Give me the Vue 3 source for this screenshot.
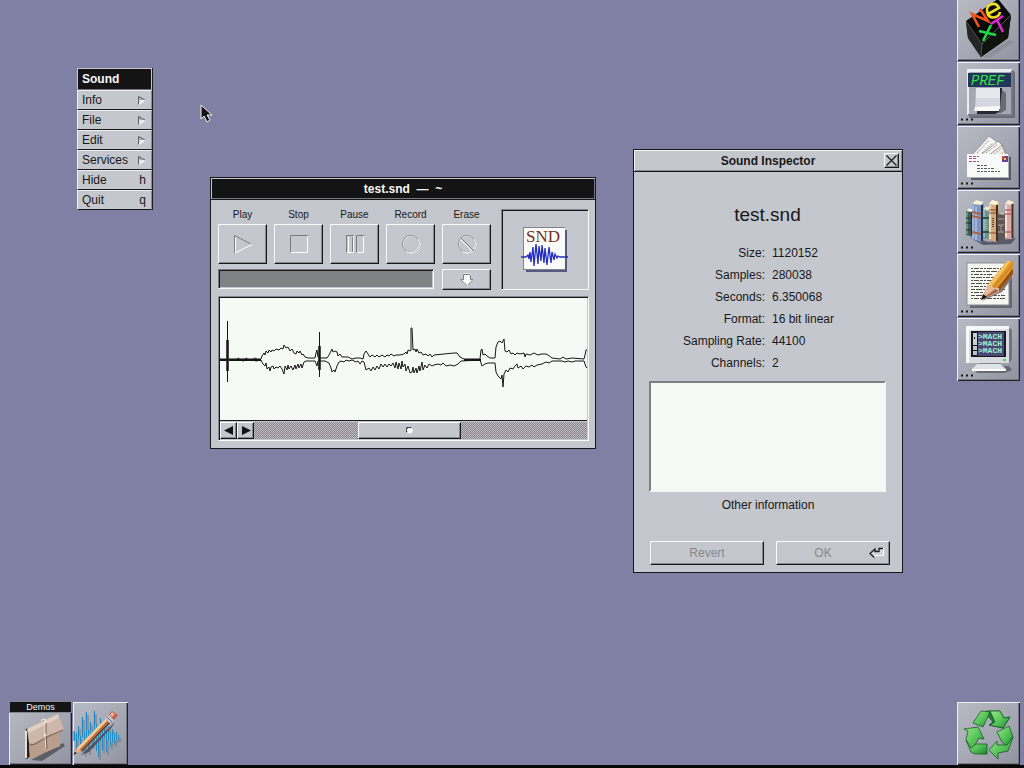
<script setup>
import { ref } from 'vue'

const menuItems = [
  { label: 'Info', sub: true },
  { label: 'File', sub: true },
  { label: 'Edit', sub: true },
  { label: 'Services', sub: true },
  { label: 'Hide', key: 'h' },
  { label: 'Quit', key: 'q' }
]

const transport = ['Play', 'Stop', 'Pause', 'Record', 'Erase']

const facts = [
  ['Size:', '1120152'],
  ['Samples:', '280038'],
  ['Seconds:', '6.350068'],
  ['Format:', '16 bit linear'],
  ['Sampling Rate:', '44100'],
  ['Channels:', '2']
]

const notes = ref('')

const upper =
  '220,359 237,359 238,358 240,359 245,359 246,358 248,359 253,359 255,358 257,359 261,359 262,356 264,353 265,355 266,351 268,353 269,350 271,352 272,350 274,351 276,349 279,350 281,348 283,349 284,345 286,348 288,347 290,351 292,349 294,353 296,354 297,351 299,353 300,351 302,355 303,354 305,357 308,358 315,358 316,353 317,350 318,357 320,358 327,358 329,355 331,351 332,349 333,352 335,351 337,352 338,356 340,354 342,357 348,357 352,359 356,358 360,358 363,359 364,354 366,351 368,354 370,357 372,355 375,357 377,355 379,357 382,355 385,357 387,355 389,356 391,354 394,356 396,355 400,355 404,354 406,352 407,354 408,350 410,351 411,350 411,328 412,328 413,350 415,349 416,352 417,349 419,353 421,352 423,355 426,354 428,356 430,354 432,357 434,355 454,353 457,353 460,357 464,359 480,359 481,350 482,349 483,355 485,354 487,356 490,358 495,358 496,347 498,342 500,341 502,343 503,341 504,339 505,351 507,352 509,350 511,354 513,353 515,355 517,353 520,354 524,353 525,357 526,354 530,355 534,353 538,355 541,354 546,354 548,355 552,358 560,359 563,357 566,359 572,358 584,359 585,355 586,350 587,350'

const lower =
  '220,360 240,360 243,361 246,360 253,360 256,361 261,360 263,364 265,366 266,363 267,369 269,367 270,371 271,367 273,366 274,369 276,367 278,368 280,366 282,369 284,374 285,366 287,370 288,365 289,369 291,366 293,370 295,365 296,369 298,364 299,368 301,364 302,368 304,362 306,361 315,361 317,366 318,361 325,361 329,363 331,368 332,372 334,370 335,372 337,366 339,362 341,361 344,362 346,360 349,361 352,360 356,362 358,361 360,364 362,361 364,362 366,370 369,368 371,371 373,367 375,370 377,366 379,369 381,364 383,367 385,364 387,367 389,364 391,366 393,363 395,368 396,362 398,369 399,363 401,369 402,361 403,367 405,364 406,371 408,366 410,373 412,372 413,367 414,373 416,368 417,373 419,366 420,371 422,362 423,370 425,365 427,368 429,364 432,366 434,365 438,364 441,365 443,363 446,366 450,365 454,366 458,364 461,361 480,360 482,366 485,364 488,363 495,363 496,372 498,376 501,379 502,375 503,387 504,374 506,370 508,372 510,368 513,369 515,366 517,364 518,368 521,366 523,369 526,366 529,367 532,365 534,367 537,365 542,364 546,362 549,363 552,361 562,361 565,362 568,361 572,362 575,361 584,361 586,367 587,368'

const paperLines = Array.from({ length: 11 }, (_, i) => 14 + i * 3)
const spikes = [
  [1, 29, 39], [3, 31, 46], [5, 24, 38], [7, 34, 46], [9, 15, 36], [11, 30, 52],
  [13, 10, 44], [15, 28, 50], [17, 20, 40], [19, 28, 44], [21, 9, 38], [23, 22, 49],
  [25, 32, 55], [27, 16, 40], [29, 28, 48], [31, 22, 36], [33, 30, 50], [35, 24, 38],
  [37, 30, 45], [39, 27, 40], [41, 32, 42], [43, 30, 38], [45, 33, 37]
]
</script>

<template>
  <main class="desktop">
    <nav class="menu" aria-label="Sound menu">
      <h1 class="menu-title">Sound</h1>
      <button v-for="m in menuItems" :key="m.label" class="menu-item" type="button">
        <span>{{ m.label }}</span>
        <svg v-if="m.sub" width="8" height="9" viewBox="0 0 8 9">
          <path d="M1 0L7 4.500H1Z" fill="#aeb0b6" />
          <path d="M1 4H7L2 8Z" fill="#e6e8ea" />
          <path d="M.5 8.500V.5L7 4" fill="none" stroke="#606268" />
          <path d="M1 8.500L7 4.500" stroke="#fff" />
        </svg>
        <kbd v-else>{{ m.key }}</kbd>
      </button>
    </nav>

    <svg class="pointer" width="13" height="19" viewBox="0 0 13 19">
      <path d="M1 1V15L4 12L7 18L10 16L7 11H12Z" fill="#151515" stroke="#f4f4f4" />
    </svg>

    <section class="window sound" aria-label="test.snd">
      <h2 class="titlebar dark">test.snd&nbsp; —&nbsp; ~</h2>
      <div class="sound-body">
        <div class="top">
          <div class="controls">
            <div class="transport">
              <div v-for="t in transport" :key="t" class="control">
                <label :for="'btn-' + t">{{ t }}</label>
                <button :id="'btn-' + t" class="raised big" type="button">
                  <svg width="22" height="22" viewBox="0 0 22 22" fill="none">
                    <template v-if="t === 'Play'">
                      <path d="M2.500 20V2.500L19 11" stroke="#7b7d84" />
                      <path d="M3.500 19.500V4M3 20L20 11.500" stroke="#fff" />
                    </template>
                    <template v-else-if="t === 'Stop'">
                      <path d="M2.500 19.500V2.500H20" stroke="#7b7d84" />
                      <path d="M3 19.500H19.500V3" stroke="#fff" />
                    </template>
                    <template v-else-if="t === 'Pause'">
                      <path d="M2.500 19.500V2.500H10M12.500 19.500V2.500H20M8.500 4V19" stroke="#7b7d84" />
                      <path d="M3 19.500H9.500V3M13 19.500H19.500V3M4.500 4V19" stroke="#fff" />
                    </template>
                    <template v-else>
                      <circle cx="11.500" cy="11.500" r="8.500" stroke="#fff" />
                      <circle cx="11" cy="11" r="8.500" stroke="#8a8c93" />
                      <path d="M18 6A9 9 0 0 1 6 18.500" stroke="#f4f6f6" />
                      <g v-if="t === 'Erase'">
                        <path d="M5 5L18 18" stroke="#7b7d84" />
                        <path d="M4.500 6.500L16 18" stroke="#fff" />
                      </g>
                    </template>
                  </svg>
                </button>
              </div>
            </div>
            <div class="progress-row">
              <div class="progress" role="progressbar" aria-label="Position" aria-valuenow="0"></div>
              <button class="raised small" type="button" aria-label="Compress">
                <svg width="16" height="14" viewBox="0 0 16 14">
                  <path d="M4.500 1V6.500H1.500L8 12.500L14.500 6.500H11.500V1Z" fill="#f8faf8" stroke="#fff" />
                  <path d="M11 1.500H4.500V6.500H1.500L8 12.500M11.500 2V6.500H14L9 12" fill="none" stroke="#7d7f86" />
                </svg>
              </button>
            </div>
          </div>
          <div class="well">
            <svg width="48" height="46" viewBox="0 0 48 46">
              <rect x="5" y="3" width="41" height="42" fill="#555a82" />
              <rect x="2" y="0" width="42" height="43" fill="#80838c" />
              <rect x="3" y="1" width="41" height="41" fill="#fafbf8" />
              <text x="5" y="15" class="snd-text">SND</text>
              <path d="M0 30H5L7 28L8 32L9 25L10 35L12 20L13 39L15 17L17 37L18 19L20 34L21 18L23 36L24 21L26 38L28 20L30 36L31 25L33 33L34 27L36 31L37 29L39 30H47" fill="none" stroke="#252ebd" stroke-width="1.300" />
            </svg>
          </div>
        </div>
        <div class="wave-box">
          <svg class="wave" viewBox="220 298 367 122" role="img" aria-label="Waveform" fill="none" stroke="#161616">
            <g shape-rendering="crispEdges">
              <path d="M220 360H261M464 360H481" stroke-width="2" />
              <path d="M227.500 321V382M319.500 332V377" />
              <path d="M226.500 340V371M228.500 340V371M318.500 346V370M320.500 346V370" stroke="#4a4a4a" />
            </g>
            <polyline :points="upper" />
            <polyline :points="lower" />
          </svg>
          <div class="scroller">
            <button type="button" class="arrow" aria-label="Scroll left">
              <svg width="10" height="9" viewBox="0 0 10 9"><path d="M9 0V9L0 4.500Z" fill="#141414" /></svg>
            </button>
            <button type="button" class="arrow" aria-label="Scroll right">
              <svg width="10" height="9" viewBox="0 0 10 9"><path d="M1 0V9L10 4.500Z" fill="#141414" /></svg>
            </button>
            <div class="track">
              <button type="button" class="knob" aria-label="Scroll knob">
                <svg width="7" height="7" viewBox="0 0 7 7">
                  <circle cx="3.500" cy="3.500" r="3" fill="#fff" />
                  <path d="M1 5A2.800 2.800 0 0 1 5 1" fill="none" stroke="#333" stroke-width="1.300" />
                </svg>
              </button>
            </div>
          </div>
        </div>
      </div>
    </section>

    <section class="window inspector" aria-label="Sound Inspector">
      <header class="titlebar light">
        <h2>Sound Inspector</h2>
        <button type="button" class="close" aria-label="Close">
          <svg width="11" height="11" viewBox="0 0 11 11"><path d="M.5 .5L10.500 10.500M10.500 .5L.5 10.500" stroke="#222" stroke-width="1.400" /></svg>
        </button>
      </header>
      <div class="inspector-body">
        <h3>test.snd</h3>
        <dl>
          <template v-for="f in facts" :key="f[0]">
            <dt>{{ f[0] }}</dt>
            <dd>{{ f[1] }}</dd>
          </template>
        </dl>
        <textarea id="other-info" v-model="notes"></textarea>
        <label class="other" for="other-info">Other information</label>
        <div class="actions">
          <button type="button" class="raised" disabled>Revert</button>
          <button type="button" class="raised ok" disabled>
            <span>OK</span>
            <svg width="16" height="12" viewBox="0 0 16 12">
              <path d="M1 6L6 2V4.500H10V1.500H15V7.500H6V10.500Z" fill="#d5d7da" />
              <path d="M6 11L1 6.500L6 2V4.500H10V1.500H14" fill="none" stroke="#1c1c1c" stroke-width="1.300" />
              <path d="M14.500 1V8.500H6V11" fill="none" stroke="#fff" />
            </svg>
          </button>
        </div>
      </div>
    </section>

    <aside class="dock" aria-label="Dock">
      <button class="tile" type="button" aria-label="NeXT">
        <svg viewBox="0 0 64 64">
          <path d="M26 59L52 42L57 44L33 60Z" fill="#8d8f9b" />
          <path d="M9 23L41 1L54 17L51 40L24 59L11 40Z" fill="#090909" />
          <path d="M9 23L25 46L24 59L11 40Z" fill="#242526" />
          <path d="M25 46L54 17L51 40L24 59Z" fill="#101210" />
          <path d="M9 23L25 46L54 17M25 46L24 58" fill="none" stroke="#515450" />
          <g fill="none" stroke-width="2.600">
            <path d="M22 29L15 16L31 23L23 11" stroke="#ef5423" />
            <path d="M31 16L42 10C39 3 29 6 30 13C31 22 42 21 43 14" stroke="#f2df1c" />
            <path d="M22 33L39 37M34 27L26 43" stroke="#20db47" />
            <path d="M34 26L46 18M40 22L46 34" stroke="#df28d2" />
          </g>
        </svg>
      </button>

      <button class="tile" type="button" aria-label="Preferences">
        <svg viewBox="0 0 64 64">
          <path d="M13 56H58V11L56 8V54H12Z" fill="#696b78" />
          <rect x="10" y="7" width="46" height="47" fill="#a5a7b3" />
          <path d="M10 54V7H56L53 10H12V51Z" fill="#eceef1" />
          <path d="M12 52H54V10L56 7V54H10Z" fill="#777985" />
          <rect x="11" y="11" width="43" height="14" fill="#233558" />
          <text x="14" y="23" class="pref-text">PREF</text>
          <path d="M20 26H45V49L38 52H20Z" fill="#272831" />
          <path d="M45 28L49 31V48L42 52Z" fill="#6a6a75" />
          <path d="M19 26H43L43 47H18Z" fill="#d3d6de" />
          <path d="M19 26H43V36H19Z" fill="#e6e8ed" />
          <path d="M18 45L43 44L42 49H17Z" fill="#fafafa" />
          <path d="M4 57.500h2m3 0h2m3 0h2" class="dots" />
        </svg>
      </button>

      <button class="tile" type="button" aria-label="Mail">
        <svg viewBox="0 0 64 64">
          <path d="M14 31H54V54H14Z" fill="#575966" />
          <path d="M15 29L32 10L40 16L38 30Z" fill="#f4f5f0" stroke="#7c7f88" stroke-width=".7" />
          <path d="M20 27L32 14M25 27L36 17" stroke="#817e83" stroke-width=".8" stroke-dasharray="2 1" />
          <path d="M24 29L41 15L46 20L44 30Z" fill="#f8f8f0" stroke="#717481" stroke-width=".7" />
          <path d="M29 27L41 18M34 28L43 21" stroke="#9b6670" stroke-width=".8" stroke-dasharray="2 1" />
          <path d="M32 29L45 19L49 29Z" fill="#f0eee8" stroke="#74747a" stroke-width=".7" />
          <path d="M37 28L45 22M42 29L47 26" stroke="#8e8587" stroke-width=".8" stroke-dasharray="2 1" />
          <rect x="10" y="28" width="42" height="24" fill="#f8faf7" />
          <path d="M10 51.500H52M51.500 28V52" stroke="#afb1b9" />
          <path d="M12 30.500H22M12 32.500H19M12 35.500H22" stroke="#c14398" stroke-dasharray="3 1" />
          <rect x="45" y="30" width="6" height="6" fill="#6d3d9c" />
          <path d="M45 30H49L45 34Z" fill="#ce4c35" /><rect x="47" y="32" width="2" height="2" fill="#f2ca42" />
          <path d="M20 39.500H31M20 42.500H37M20 45.500H43" stroke="#555a65" stroke-dasharray="3 1 2 1" />
          <path d="M4 57.500h2m3 0h2m3 0h2" class="dots" />
        </svg>
      </button>

      <button class="tile" type="button" aria-label="Librarian">
        <svg viewBox="0 0 64 64">
          <path d="M12 47L32 52L59 48L54 54L26 55Z" fill="#595b68" />
          <path d="M9 21L12 18L17 20V47L9 45Z" fill="#3e5f56" />
          <path d="M9 21L12 18L17 20L15 22Z" fill="#f4f3dd" />
          <path d="M10 22V44" stroke="#a3c4aa" /><path d="M9 28H16M9 33H16M9 40H16" stroke="#1c2f28" />
          <path d="M15 22V46" stroke="#1d2b27" stroke-width="2" />
          <path d="M15 14L19 10L27 12V48L24 52L15 49Z" fill="#7e94c3" />
          <path d="M15 14L19 10L27 12L24 15Z" fill="#f5f1da" />
          <path d="M16 15V49M19 16V50" stroke="#c4d3f0" /><path d="M15 22L24 24M15 26L24 28M15 42L24 44" stroke="#ae6544" stroke-width="2" />
          <path d="M25 15V51" stroke="#242f47" stroke-width="2" />
          <path d="M26 19L29 16L34 18V46L31 49L26 48Z" fill="#6d9091" />
          <path d="M26 19L29 16L34 18L31 21Z" fill="#e5e4cc" />
          <path d="M27 20V47" stroke="#bedbd4" /><path d="M26 28H32M26 42H32" stroke="#2b5552" stroke-width="2" /><path d="M29 30V40" stroke="#dbe6cd" stroke-dasharray="1 1" />
          <path d="M32 14L35 10L42 12V48L39 52L32 50Z" fill="#d2aa7c" />
          <path d="M32 14L35 10L42 12L39 15Z" fill="#fff8dd" />
          <path d="M33 15V49" stroke="#f2dcac" stroke-width="2" /><path d="M32 20H39M32 23H39M32 43H39" stroke="#944125" /><path d="M36 28V38" stroke="#5b4637" stroke-width="2" stroke-dasharray="1 1" />
          <path d="M40 15V51" stroke="#362c29" stroke-width="2" />
          <path d="M40 24L43 21L48 22V50L41 51Z" fill="#5f5555" />
          <path d="M41 24L43 21L48 22L47 25Z" fill="#bbb2a8" />
          <path d="M41 29H47M41 35H47M41 42H47" stroke="#b7aaa5" /><path d="M44 36V41" stroke="#ead6ab" stroke-dasharray="1 1" />
          <path d="M48 14L51 10L57 12V46L54 49L48 48Z" fill="#d8aaa2" />
          <path d="M48 14L51 10L57 12L54 15Z" fill="#f7ead8" />
          <path d="M49 15V47" stroke="#f7dcd5" stroke-width="2" /><path d="M48 20H54M48 24H54M48 42H54" stroke="#ac3c36" />
          <path d="M55.500 14V48" stroke="#3f2f30" stroke-width="2" />
          <path d="M4 57.500h2m3 0h2m3 0h2" class="dots" />
        </svg>
      </button>

      <button class="tile" type="button" aria-label="Edit">
        <svg viewBox="0 0 64 64">
          <rect x="13" y="12" width="42" height="42" fill="#656773" />
          <rect x="10" y="9" width="42" height="42" fill="#f6f8f0" stroke="#8b8d94" />
          <path v-for="(y, i) in paperLines" :key="y" :d="`M14 ${y}.500H${i % 3 === 2 ? 35 : 48}`" stroke="#4c4d4c" :stroke-dasharray="i % 2 ? '4 1 6 1 2 1' : '2 1 5 1 3 1'" />
          <path d="M25 47L45 38L55 24V19Z" fill="#7c7c80" />
          <path d="M30 32L50 7H56V20L42 37Z" fill="#d78b27" />
          <path d="M30 32L50 7H54L34 33Z" fill="#f5c35f" />
          <path d="M39 36L56 14V20L42 37Z" fill="#985014" />
          <path d="M34 33L55 8M38 35L56 13" stroke="#f3ad42" />
          <path d="M24 46L30 32L34 31L37 34L42 34L42 38Z" fill="#e7b99a" />
          <path d="M24 46L38 35L42 37Z" fill="#a76849" />
          <path d="M24 46L26 40L30 43Z" fill="#171717" />
          <path d="M4 57.500h2m3 0h2m3 0h2" class="dots" />
        </svg>
      </button>

      <button class="tile" type="button" aria-label="Terminal">
        <svg viewBox="0 0 64 64">
          <path d="M17 50L52 48L55 52L48 55H20Z" fill="#656875" />
          <path d="M22 44H43V49H22Z" fill="#85868f" />
          <path d="M15 51L20 46H43L49 51L47 53H17Z" fill="#dfe2e6" />
          <path d="M15 51H49V53H15Z" fill="#fff" />
          <path d="M51 9L55 12V41L52 45Z" fill="#72747f" />
          <rect x="9" y="8" width="43" height="37" rx="1" fill="#d8dce1" />
          <path d="M9 8H52V11L12 12V45H9Z" fill="#f7f8f8" />
          <rect x="14" y="13" width="35" height="26" fill="#17191f" />
          <rect x="21" y="14" width="26" height="24" fill="#4d4775" />
          <rect x="16" y="15" width="4" height="12" fill="#cbd1d7" />
          <rect x="16" y="28" width="4" height="4" fill="#bcc5cb" /><rect x="16" y="33" width="4" height="4" fill="#bcc5cb" />
          <path d="M17.500 19v2" stroke="#111" />
          <g class="mach"><text x="21" y="21">&gt;MACH</text><text x="21" y="28">&gt;MACH</text><text x="21" y="35">&gt;MACH</text></g>
          <rect x="46" y="41" width="3" height="2" fill="#43db48" />
          <path d="M4 57.500h2m3 0h2m3 0h2" class="dots" />
        </svg>
      </button>
    </aside>

    <div class="shelf-left">
      <button class="tile demos" type="button">
        <span>Demos</span>
        <svg viewBox="0 12 64 52">
          <path d="M22 59L54 42L56 45L33 60Z" fill="#5d5e66" />
          <path d="M16 29L19 27L21 55L18 58L16 57Z" fill="#20201f" />
          <path d="M16 29L18 30V57L16 57Z" fill="#eadfce" />
          <path d="M20 30L51 16V45L21 58Z" fill="#a78d7d" />
          <path d="M20 44L51 29V45L21 58Z" fill="#b99e8c" />
          <path d="M18 28L49 13L55 28L50 31L40 34L24 43L20 42Z" fill="#cdb7a8" />
          <path d="M18 28L49 13L50 17L20 32Z" fill="#e0cfc1" />
          <path d="M21 44L26 43L40 35L54 29" fill="none" stroke="#725d4e" />
          <path d="M32 20L34 18L37 19L36 22L36 34L37 48" fill="none" stroke="#f4eadc" />
          <path d="M37 22L37 34L38 48" fill="none" stroke="#5c4638" stroke-width=".8" />
          <circle cx="36" cy="34" r="1.500" fill="#efe2d5" />
        </svg>
      </button>
      <button class="tile demo-sound" type="button" aria-label="Sound">
        <svg viewBox="0 0 64 64">
          <path v-for="s in spikes" :key="s[0]" :d="`M${s[0] + 2} ${s[1] + 3}V${s[2] + 3}`" stroke="#6b7787" stroke-width="1" />
          <path v-for="s in spikes" :key="'b' + s[0]" :d="`M${s[0]} ${s[1]}V${s[2]}`" stroke="#218ac3" stroke-width="2" />
          <path v-for="s in spikes" :key="'h' + s[0]" :d="`M${s[0] - 0.5} ${s[1]}V${s[2]}`" stroke="#78cbe6" stroke-width=".8" />
          <path d="M8 53L42 20L39 25L16 50Z" fill="#53545e" />
          <path d="M1 52L4 46L32 17L37 21L9 49Z" fill="#b86e3d" />
          <path d="M4 46L32 17L34 19L6 48Z" fill="#f4cc9b" />
          <path d="M8 49L36 20L37 21L9 50Z" fill="#633d2b" />
          <path d="M1 52L4 46L9 49Z" fill="#e5b18d" /><path d="M0 53L2 50L4 51Z" fill="#161616" />
          <path d="M32 17L36 13L41 18L37 21Z" fill="#c8cacd" /><path d="M34 15L39 20" stroke="#555e8c" />
          <path d="M36 13L39 9L45 13L41 18Z" fill="#c65e4d" /><path d="M37 13L39 10L42 12L39 15Z" fill="#edb1a0" />
        </svg>
      </button>
    </div>

    <button class="tile recycler" type="button" aria-label="Recycler">
      <svg viewBox="0 0 64 64">
        <defs>
          <linearGradient id="leaf" x1="0" y1="0" x2="1" y2="1">
            <stop offset="0" stop-color="#96ea8b" /><stop offset=".6" stop-color="#4fbd54" /><stop offset="1" stop-color="#1f7c2c" />
          </linearGradient>
        </defs>
        <g stroke="#145c22" stroke-width=".8" stroke-linejoin="round">
          <path d="M29 9H43L47 16L53 15L46 26L32 23L36 20L30 13Z" fill="#237c30" />
          <path d="M16 21L24 9L33 10L26 25Z" fill="url(#leaf)" />
          <path d="M33 9H43L47 16L53 15L46 26L33 23L38 20Z" fill="url(#leaf)" />
          <path d="M40 30L52 24L56 35L50 44L45 40Z" fill="url(#leaf)" />
          <path d="M40 39V43L50 43L56 35L51 49L41 51V57L32 48Z" fill="url(#leaf)" />
          <path d="M7 27L21 25L27 37L22 36L15 48L9 38L11 29Z" fill="url(#leaf)" />
          <path d="M9 38L14 50L18 52H30V42H19L14 46Z" fill="url(#leaf)" />
        </g>
      </svg>
    </button>
    <div class="strip"></div>
  </main>
</template>

<style>
html,
body {
  background: #8080a5;
}
</style>

<style scoped>
* {
  box-sizing: border-box;
}
h1, h2, h3, dl, dd {
  margin: 0;
}
button {
  padding: 0;
  border: 0;
  font: inherit;
  color: inherit;
}
svg {
  display: block;
}
.desktop {
  position: relative;
  min-height: 100vh;
  overflow: hidden;
  background: #8080a5;
  color: #181818;
  font: 12px/20px "Liberation Sans", Arial, sans-serif;
}

/* menu */
.menu {
  position: absolute;
  left: 77px;
  top: 68px;
  width: 76px;
  border-right: 1px solid #1c1c1c;
}
.menu-title {
  height: 22px;
  padding-left: 4px;
  border: 1px solid #c4c7cd;
  border-bottom: 1px solid #70727a;
  background: #141414;
  color: #f8f8f8;
  font-size: 12px;
  line-height: 20px;
}
.menu-item {
  display: flex;
  align-items: center;
  justify-content: space-between;
  width: 100%;
  height: 20px;
  padding: 0 5px 0 4px;
  border: 1px solid #eef0f1;
  border-right-color: #8a8c93;
  border-bottom-color: #181818;
  background: #c4c7cd;
}
.menu-item kbd {
  font: inherit;
}
.pointer {
  position: absolute;
  left: 200px;
  top: 104px;
}

/* windows */
.window {
  position: absolute;
  border: 1px solid #181818;
  background: #c4c7cd;
}
.sound {
  left: 210px;
  top: 177px;
  width: 386px;
}
.inspector {
  left: 633px;
  top: 149px;
  width: 270px;
}
.titlebar {
  height: 22px;
  border-bottom: 1px solid #181818;
  font-size: 12px;
  line-height: 22px;
  text-align: center;
}
.titlebar.dark {
  background: #141414;
  color: #f8f8f8;
  box-shadow: inset 1px 1px #c4c7cd, inset -1px -1px #777980;
}
.titlebar.light {
  display: grid;
  grid-template-columns: 18px 1fr 18px;
  align-items: center;
  line-height: 20px;
  box-shadow: inset 1px 1px #f4f6f5, inset -1px -1px #8a8c93;
}
.titlebar h2 {
  grid-column: 2;
  font-size: 12px;
}
.raised,
.arrow,
.knob,
.close {
  display: flex;
  align-items: center;
  justify-content: center;
  background: #c4c7cd;
  border: 1px solid #fafcfa;
  border-right-color: #181818;
  border-bottom-color: #181818;
  box-shadow: inset -1px -1px #888a92;
}
.close {
  width: 15px;
  height: 15px;
}
.sound-body {
  padding: 9px 6px 7px 7px;
}
.top {
  display: flex;
  justify-content: space-between;
  gap: 8px;
}
.transport {
  display: flex;
  gap: 7px;
}
.control {
  width: 49px;
}
.control label {
  display: block;
  height: 15px;
  font-size: 10px;
  line-height: 12px;
  text-align: center;
}
.big {
  width: 100%;
  height: 40px;
}
.progress-row {
  display: flex;
  gap: 8px;
  margin-top: 5px;
}
.progress {
  flex: 1;
  height: 20px;
  border: 1px solid #777980;
  border-right-color: #fafcfa;
  border-bottom-color: #fafcfa;
  background: #808182;
  box-shadow: inset 1px 1px #181818, inset -1px -1px #c4c7cd;
}
.small {
  width: 49px;
  height: 21px;
}
.well {
  display: flex;
  align-items: center;
  justify-content: center;
  width: 88px;
  border: 1px solid #85878e;
  border-right-color: #fafcfa;
  border-bottom-color: #fafcfa;
  box-shadow: inset 1px 1px #181818;
}
.snd-text {
  font: 17px "Liberation Serif", serif;
  fill: #74301c;
}
.wave-box {
  margin-top: 6px;
  border: 1px solid #85878e;
  border-right-color: #fafcfa;
  border-bottom-color: #fafcfa;
  box-shadow: inset 1px 1px #181818;
  padding: 1px;
}
.wave {
  width: 100%;
  background: #f6faf5;
}
.scroller {
  display: flex;
  height: 19px;
  padding: 1px 0 0;
  border-top: 1px solid #181818;
}
.arrow {
  width: 17px;
}
.track {
  flex: 1;
  padding-left: 104px;
  background: repeating-conic-gradient(#89858f 0% 25%, #c2bcc6 0% 50%) 0 0 / 2px 2px;
}
.knob {
  width: 103px;
  height: 100%;
}

/* inspector */
.inspector-body {
  padding: 32px 12px 7px 16px;
}
.inspector h3 {
  padding-right: 5px;
  font-size: 19px;
  font-weight: 400;
  line-height: 22px;
  text-align: center;
}
.inspector dl {
  display: grid;
  grid-template-columns: 115px 1fr;
  column-gap: 7px;
  margin-top: 16px;
  line-height: 22px;
}
.inspector dt {
  text-align: right;
}
.inspector textarea {
  display: block;
  width: 237px;
  height: 111px;
  margin: 7px 0 0 -1px;
  border: 2px solid #7c7f84;
  border-right-color: #f4f6f4;
  border-bottom-color: #f4f6f4;
  outline: 0;
  background: #f6faf5;
  resize: none;
  font: inherit;
}
.other {
  display: block;
  width: 236px;
  margin-top: 3px;
  text-align: center;
}
.actions {
  display: grid;
  grid-template-columns: 1fr 1fr;
  gap: 12px;
  margin-top: 26px;
}
.actions .raised {
  height: 24px;
  color: #85888e;
}
.actions .ok {
  display: grid;
  grid-template-columns: 1fr 20px;
}

/* tiles */
.tile {
  display: block;
  width: 63px;
  height: 63px;
  overflow: hidden;
  background: linear-gradient(135deg, #b8bac4, #a5a7b2 55%, #90929f);
  box-shadow: inset 1px 1px #eceef1, inset -1px -1px #202024, inset -2px -2px #777985;
}
.tile svg {
  width: 64px;
}
.dots {
  stroke: #17171a;
  stroke-width: 2;
}
.dock {
  position: absolute;
  top: -2px;
  right: 3px;
  display: grid;
  gap: 1px;
}
.pref-text {
  font: italic 14px "Liberation Mono", monospace;
  fill: #35e246;
}
.mach {
  font: bold 8px "Liberation Mono", monospace;
  fill: #9af0cf;
}
.shelf-left {
  position: absolute;
  left: 9px;
  bottom: 3px;
  display: flex;
  align-items: end;
  gap: 1px;
}
.demos {
  height: 64px;
}
.demos span {
  display: block;
  height: 12px;
  border: 1px solid #85878e;
  background: #141414;
  color: #f8f8f8;
  font-size: 9px;
  line-height: 10px;
}
.demo-sound {
  width: 55px;
}
.recycler {
  position: absolute;
  right: 4px;
  bottom: 3px;
}
.dock {
  right: 4px;
}
.strip {
  position: absolute;
  inset: auto 0 0;
  height: 3px;
  background: #080808;
}
</style>
